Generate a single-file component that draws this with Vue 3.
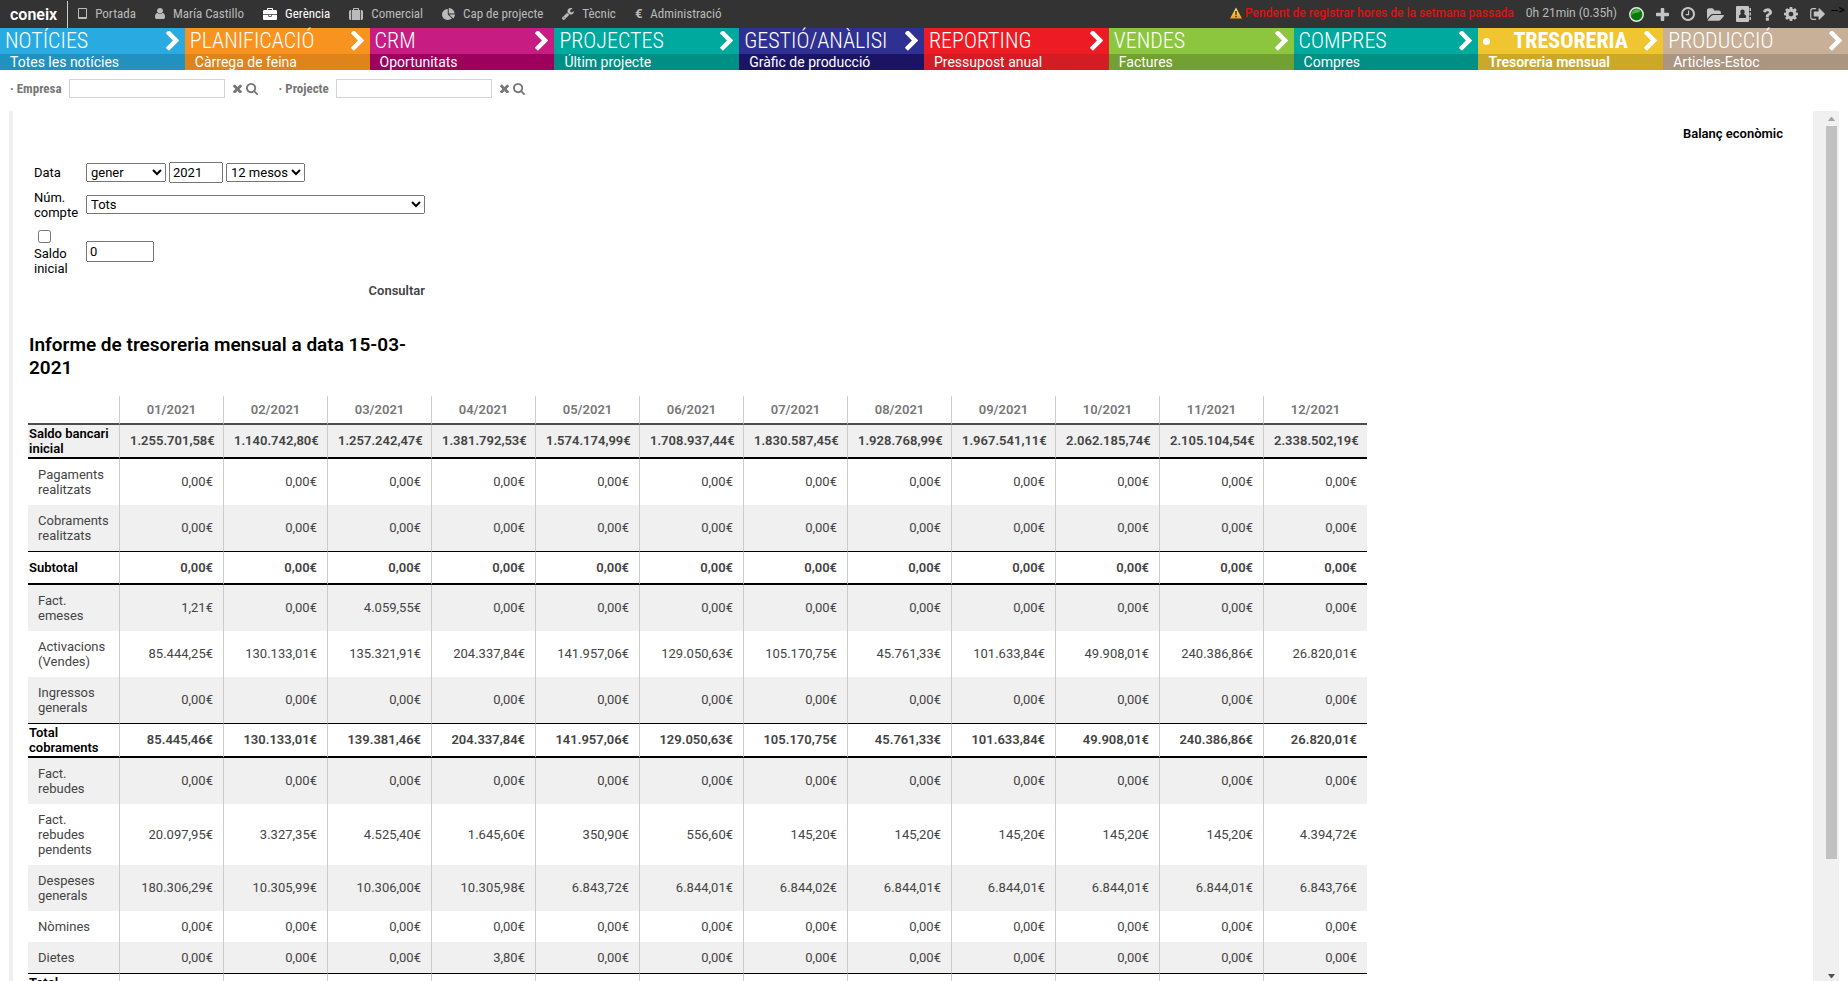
<script setup>
import { ref } from 'vue'

const icons = {
  user: ['256 128 1280 1536', 'M1536 1399q0 109-62.5 187t-150.5 78h-854q-88 0-150.5-78t-62.5-187q0-85 8.5-160.5t31.5-152 58.5-131 94-89 134.5-34.5q131 128 313 128t313-128q76 0 134.5 34.5t94 89 58.5 131 31.5 152 8.5 160.5zm-256-887q0 159-112.5 271.5t-271.5 112.5-271.5-112.5-112.5-271.5 112.5-271.5 271.5-112.5 271.5 112.5 112.5 271.5z'],
  tablet: ['0 0 9 11', 'M1 0h7q1 0 1 1v9q0 1-1 1h-7q-1 0-1-1v-9q0-1 1-1zM1 1v8h7v-8z'],
  briefcase: ['0 0 1792 1536', 'M640 256h512v-128h-512v128zm1152 640v480q0 66-47 113t-113 47h-1472q-66 0-113-47t-47-113v-480h672v160q0 26 19 45t45 19h320q26 0 45-19t19-45v-160h672zm-768 0v128h-256v-128h256zm768-480v384h-1792v-384q0-66 47-113t113-47h352v-160q0-40 28-68t68-28h576q40 0 68 28t28 68v160h352q66 0 113 47t47 113z'],
  suitcase: ['0 0 1792 1536', 'M640 256h512v-128h-512v128zm-352 0v1280h-64q-92 0-158-66t-66-158v-832q0-92 66-158t158-66h64zm1120 0v1280h-1024v-1280h128v-160q0-40 28-68t68-28h576q40 0 68 28t28 68v160h128zm384 224v832q0 92-66 158t-158 66h-64v-1280h64q92 0 158 66t66 158z'],
  pie: ['0 0 1728 1664', 'M768 890l546 546q-106 108-247.5 168t-298.5 60q-209 0-385.5-103t-279.5-279.5-103-385.5 103-385.5 279.5-279.5 385.5-103v762zm187 6h773q0 157-60 298.5t-168 247.5zm709-128h-768v-768q209 0 385.5 103t279.5 279.5 103 385.5z'],
  wrench: ['85 128 1641 1643', 'M448 1472q0-26-19-45t-45-19-45 19-19 45 19 45 45 19 45-19 19-45zm644-420l-682 682q-37 37-90 37-52 0-91-37l-106-108q-38-36-38-90 0-53 38-91l681-681q39 98 114.5 173.5t173.5 114.5zm634-435q0 39-23 106-47 134-164.5 217.5t-258.5 83.5q-185 0-316.5-131.5t-131.5-316.5 131.5-316.5 316.5-131.5q58 0 121.5 16.5t107.5 46.5q16 11 16 28t-16 28l-293 169v224l193 107q5-3 79-48.5t135.5-81 70.5-35.5q15 0 23.5 10t8.5 25z'],
  plus: ['192 128 1408 1408', 'M1600 736v192q0 40-28 68t-68 28h-416v416q0 40-28 68t-68 28h-192q-40 0-68-28t-28-68v-416h-416q-40 0-68-28t-28-68v-192q0-40 28-68t68-28h416v-416q0-40 28-68t68-28h192q40 0 68 28t28 68v416h416q40 0 68 28t28 68z'],
  clock: ['128 128 1536 1536', 'M1024 544v448q0 14-9 23t-23 9h-320q-14 0-23-9t-9-23v-64q0-14 9-23t23-9h224v-352q0-14 9-23t23-9h64q14 0 23 9t9 23zm416 352q0-148-73-273t-198-198-273-73-273 73-198 198-73 273 73 273 198 198 273 73 273-73 198-198 73-273zm224 0q0 209-103 385.5t-279.5 279.5-385.5 103-385.5-103-279.5-279.5-103-385.5 103-385.5 279.5-279.5 385.5-103 385.5 103 279.5 279.5 103 385.5z'],
  folder: ['0 128 1879 1408', 'M1879 952q0 31-31 66l-336 396q-43 51-120.5 86.5t-143.5 35.5h-1088q-34 0-60.5-13t-26.5-43q0-31 31-66l336-396q43-51 120.5-86.5t143.5-35.5h1088q34 0 60.5 13t26.5 43zm-343-344v160h-832q-94 0-197 47.5t-164 119.5l-337 396-5 6q0-4-.5-12.5t-.5-12.5v-960q0-92 66-158t158-66h320q92 0 158 66t66 158v32h544q92 0 158 66t66 158z'],
  book: ['0 0 15 16', 'M1 0h11q1 0 1 1v14q0 1-1 1h-11q-1 0-1-1v-14q0-1 1-1zM6.5 3.5a2.3 2.3 0 0 0-2.2 2.3q0 1.2 .7 2.1q-2.2 .3-2.2 3.1q0 1 1 1h5.4q1 0 1-1q0-2.8-2.2-3.1q.7-.9 .7-2.1a2.3 2.3 0 0 0-2.2-2.3zM13.5 2h1q.5 0 .5 .5v2q0 .5-.5 .5h-1zM13.5 6.5h1q.5 0 .5 .5v2q0 .5-.5 .5h-1zM13.5 11h1q.5 0 .5 .5v2q0 .5-.5 .5h-1z'],
  question: ['476 256 928 1280', 'M1088 1256v240q0 16-12 28t-28 12h-240q-16 0-28-12t-12-28v-240q0-16 12-28t28-12h240q16 0 28 12t12 28zm316-600q0 54-15.5 101t-35 76.5-55 59.5-57.5 43.5-61 35.5q-41 23-68.5 65t-27.5 67q0 17-12 32.5t-28 15.5h-240q-15 0-25.5-18.5t-10.5-37.5v-45q0-83 65-156.5t143-108.5q59-27 84-56t25-76q0-42-46.5-74t-107.5-32q-65 0-108 29-35 25-107 115-13 16-31 16-12 0-25-8l-164-125q-13-10-15.5-25t5.5-28q160-266 464-266 80 0 161 31t146 83 106 127.5 41 158.5z'],
  cog: ['128 128 1536 1536', 'M1152 896q0-106-75-181t-181-75-181 75-75 181 75 181 181 75 181-75 75-181zm512-109v222q0 12-8 23t-20 13l-185 28q-19 54-39 91 35 50 107 138 10 12 10 25t-9 23q-27 37-99 108t-94 71q-12 0-26-9l-138-108q-44 23-91 38-16 136-29 186-7 28-36 28h-222q-14 0-24.5-8.5t-11.5-21.5l-28-184q-49-16-90-37l-141 107q-10 9-25 9-14 0-25-11-126-114-165-168-7-10-7-23 0-12 8-23 15-21 51-66.5t54-70.5q-27-50-41-99l-183-27q-13-2-21-12.5t-8-23.5v-222q0-12 8-23t19-13l186-28q14-46 39-92-40-57-107-138-10-12-10-24 0-10 9-23 26-36 98.5-107.5t94.5-71.5q13 0 26 10l138 107q44-23 91-38 16-136 29-186 7-28 36-28h222q14 0 24.5 8.5t11.5 21.5l28 184q49 16 90 37l142-107q9-9 24-9 13 0 25 10 129 119 165 170 7 8 7 22 0 12-8 23-15 21-51 66.5t-54 70.5q26 50 41 98l183 28q13 2 21 12.5t8 23.5z'],
  exit: ['64 256 1568 1280', 'M704 1440q0 4 1 20t.5 26.5-3 23.5-10 19.5-20.5 6.5h-320q-119 0-203.5-84.5t-84.5-203.5v-704q0-119 84.5-203.5t203.5-84.5h320q13 0 22.5 9.5t9.5 22.5q0 4 1 20t.5 26.5-3 23.5-10 19.5-20.5 6.5h-320q-66 0-113 47t-47 113v704q0 66 47 113t113 47h312l11.5 1 11.5 3 8 5.5 7 9 2 13.5zm928-544q0 26-19 45l-544 544q-19 19-45 19t-45-19-19-45v-288h-448q-26 0-45-19t-19-45v-384q0-26 19-45t45-19h448v-288q0-26 19-45t45-19 45 19l544 544q19 19 19 45z'],
}

const nav = [
  { label: 'Portada', icon: 'tablet', w: 9, h: 11 },
  { label: 'María Castillo', icon: 'user', w: 10, h: 11 },
  { label: 'Gerència', icon: 'briefcase', w: 14, h: 12, active: true },
  { label: 'Comercial', icon: 'suitcase', w: 14, h: 12 },
  { label: 'Cap de projecte', icon: 'pie', w: 13, h: 12 },
  { label: 'Tècnic', icon: 'wrench', w: 12, h: 12 },
  { label: 'Administració', glyph: '€' },
]

const tools = [
  { name: 'Afegir', icon: 'plus', w: 13, h: 13 },
  { name: 'Hores', icon: 'clock', w: 14, h: 14 },
  { name: 'Carpetes', icon: 'folder', w: 17, h: 13 },
  { name: 'Contactes', icon: 'book', w: 15, h: 16 },
  { name: 'Ajuda', icon: 'question', w: 9, h: 13 },
  { name: 'Configuració', icon: 'cog', w: 14, h: 14 },
  { name: 'Sortir', icon: 'exit', w: 15, h: 12 },
]

const tiles = [
  { title: 'NOTÍCIES', sub: 'Totes les notícies', tone: 'sky' },
  { title: 'PLANIFICACIÓ', sub: 'Càrrega de feina', tone: 'orange' },
  { title: 'CRM', sub: 'Oportunitats', tone: 'magenta' },
  { title: 'PROJECTES', sub: 'Últim projecte', tone: 'teal' },
  { title: 'GESTIÓ/ANÀLISI', sub: 'Gràfic de producció', tone: 'indigo' },
  { title: 'REPORTING', sub: 'Pressupost anual', tone: 'red' },
  { title: 'VENDES', sub: 'Factures', tone: 'green' },
  { title: 'COMPRES', sub: 'Compres', tone: 'teal' },
  { title: 'TRESORERIA', sub: 'Tresoreria mensual', tone: 'yellow', active: true },
  { title: 'PRODUCCIÓ', sub: 'Articles-Estoc', tone: 'sand' },
]

const filters = [
  { id: 'empresa', label: 'Empresa' },
  { id: 'projecte', label: 'Projecte' },
]

const months = Array.from({ length: 12 }, (_, i) => `${String(i + 1).padStart(2, '0')}/2021`)
const zeros = Array(12).fill('0,00€')
const euros = (list) => list.map((v) => `${v}€`)
const rows = [
  { label: 'Saldo bancari inicial', kind: 'opening', values: euros(['1.255.701,58', '1.140.742,80', '1.257.242,47', '1.381.792,53', '1.574.174,99', '1.708.937,44', '1.830.587,45', '1.928.768,99', '1.967.541,11', '2.062.185,74', '2.105.104,54', '2.338.502,19']) },
  { label: 'Pagaments realitzats', values: zeros },
  { label: 'Cobraments realitzats', values: zeros },
  { label: 'Subtotal', kind: 'total', values: zeros },
  { label: 'Fact. emeses', values: ['1,21€', '0,00€', '4.059,55€', ...zeros.slice(3)] },
  { label: 'Activacions (Vendes)', values: euros(['85.444,25', '130.133,01', '135.321,91', '204.337,84', '141.957,06', '129.050,63', '105.170,75', '45.761,33', '101.633,84', '49.908,01', '240.386,86', '26.820,01']) },
  { label: 'Ingressos generals', values: zeros },
  { label: 'Total cobraments', kind: 'total', values: euros(['85.445,46', '130.133,01', '139.381,46', '204.337,84', '141.957,06', '129.050,63', '105.170,75', '45.761,33', '101.633,84', '49.908,01', '240.386,86', '26.820,01']) },
  { label: 'Fact. rebudes', values: zeros },
  { label: 'Fact. rebudes pendents', values: euros(['20.097,95', '3.327,35', '4.525,40', '1.645,60', '350,90', '556,60', '145,20', '145,20', '145,20', '145,20', '145,20', '4.394,72']) },
  { label: 'Despeses generals', values: euros(['180.306,29', '10.305,99', '10.306,00', '10.305,98', '6.843,72', '6.844,01', '6.844,02', '6.844,01', '6.844,01', '6.844,01', '6.844,01', '6.843,76']) },
  { label: 'Nòmines', values: zeros },
  { label: 'Dietes', values: ['0,00€', '0,00€', '0,00€', '3,80€', ...zeros.slice(4)] },
  { label: 'Total pagaments', kind: 'total', values: Array(12).fill('') },
]

const search = ref({ empresa: '', projecte: '' })
const month = ref('gener')
const year = ref('2021')
const span = ref('12 mesos')
const account = ref('Tots')
const useBalance = ref(false)
const balance = ref('0')
</script>

<template>
  <div class="app">
    <header class="topbar">
      <a class="brand" href="#">coneix</a>
      <nav class="nav">
        <a v-for="n in nav" :key="n.label" href="#" :class="{ active: n.active }">
          <svg v-if="n.icon" :width="n.w" :height="n.h" :viewBox="icons[n.icon][0]" preserveAspectRatio="none"><path :d="icons[n.icon][1]" fill="currentColor" fill-rule="evenodd" /></svg>
          <span v-else class="euro">{{ n.glyph }}</span>
          <span>{{ n.label }}</span>
        </a>
      </nav>
      <div class="status">
        <a class="alert" href="#">
          <svg width="12" height="12" viewBox="0 0 12 12">
            <defs><linearGradient id="warn" x1="0" y1="0" x2="0" y2="1"><stop offset="0" stop-color="#ffe680" /><stop offset="1" stop-color="#f0a010" /></linearGradient></defs>
            <path d="M6 0.5L12 11.5H0z" fill="url(#warn)" />
            <path d="M5.2 4h1.6l-.3 4h-1zM5.3 8.8h1.4v1.4h-1.4z" fill="#222" />
          </svg>
          <span>Pendent de registrar hores de la setmana passada</span>
        </a>
        <span class="time">0h 21min (0.35h)</span>
        <div class="tools">
          <button type="button" aria-label="Estat">
            <svg width="15" height="15" viewBox="0 0 15 15">
              <circle cx="7.5" cy="7.5" r="6.7" fill="#087a08" stroke="#e8e8e8" stroke-width="1.5" />
              <path d="M2.5 9C3.5 5.5 7 6.5 9 5.5C11 4.5 11.5 4 11 3.2A5.5 5.5 0 0 0 2.5 9z" fill="#4fae4a" />
            </svg>
          </button>
          <button v-for="t in tools" :key="t.name" type="button" :aria-label="t.name">
            <svg :width="t.w" :height="t.h" :viewBox="icons[t.icon][0]"><path :d="icons[t.icon][1]" fill="currentColor" fill-rule="evenodd" /></svg>
          </button>
        </div>
        <span class="stray">--&gt;</span>
      </div>
    </header>

    <nav class="tiles">
      <div v-for="t in tiles" :key="t.title" class="tile" :class="[t.tone, { active: t.active }]">
        <a class="title" href="#">
          <span v-if="t.active" class="dot"></span>
          <span>{{ t.title }}</span>
          <svg width="13" height="20" viewBox="346 100 1036 1546"><path fill="#fff" d="M1363 877l-742 742q-19 19-45 19t-45-19l-166-166q-19-19-19-45t19-45l531-531-531-531q-19-19-19-45t19-45l166-166q19-19 45-19t45 19l742 742q19 19 19 45t-19 45z" /></svg>
        </a>
        <a class="sub" href="#">{{ t.sub }}</a>
      </div>
    </nav>

    <form class="filters" @submit.prevent>
      <div v-for="f in filters" :key="f.id" class="filter">
        <label :for="f.id">· {{ f.label }}</label>
        <input :id="f.id" v-model="search[f.id]" type="text" />
        <button type="button" aria-label="Esborrar" @click="search[f.id] = ''">
          <svg width="9" height="9" viewBox="302 302 1188 1188"><path fill="currentColor" d="M1490 1322q0 40-28 68l-136 136q-28 28-68 28t-68-28l-294-294-294 294q-28 28-68 28t-68-28l-136-136q-28-28-28-68t28-68l294-294-294-294q-28-28-28-68t28-68l136-136q28-28 68-28t68 28l294 294 294-294q28-28 68-28t68 28l136 136q28 28 28 68t-28 68l-294 294 294 294q28 28 28 68z" /></svg>
        </button>
        <button type="button" aria-label="Cercar">
          <svg width="12" height="12" viewBox="64 128 1664 1664"><path fill="currentColor" d="M1216 832q0-185-131.5-316.5t-316.5-131.5-316.5 131.5-131.5 316.5 131.5 316.5 316.5 131.5 316.5-131.5 131.5-316.5zm512 832q0 52-38 90t-90 38q-54 0-90-38l-343-342q-179 124-399 124-143 0-273.5-55.5t-225-150-150-225-55.5-273.5 55.5-273.5 150-225 225-150 273.5-55.5 273.5 55.5 225 150 150 225 55.5 273.5q0 220-124 399l343 343q37 37 37 90z" /></svg>
        </button>
      </div>
    </form>

    <main class="panel">
      <div class="content">
        <a class="link" href="#">Balanç econòmic</a>
        <form class="query" @submit.prevent>
          <label for="month">Data</label>
          <div class="controls">
            <select id="month" v-model="month" class="month"><option>gener</option></select>
            <input v-model="year" class="year" type="text" aria-label="Any" />
            <select v-model="span" class="span" aria-label="Període"><option>12 mesos</option></select>
          </div>
          <label for="account">Núm. compte</label>
          <select id="account" v-model="account"><option>Tots</option></select>
          <label for="use"><input id="use" v-model="useBalance" type="checkbox" />Saldo inicial</label>
          <input v-model="balance" class="balance" type="text" aria-label="Import del saldo inicial" />
          <button class="submit" type="submit">Consultar</button>
        </form>
        <h1>Informe de tresoreria mensual a data 15-03-2021</h1>
        <table>
          <thead>
            <tr>
              <th class="corner"></th>
              <th v-for="m in months" :key="m" scope="col">{{ m }}</th>
            </tr>
          </thead>
          <tbody>
            <tr v-for="r in rows" :key="r.label" :class="r.kind">
              <th scope="row">{{ r.label }}</th>
              <td v-for="(v, i) in r.values" :key="i">{{ v }}</td>
            </tr>
          </tbody>
        </table>
      </div>
      <div class="rail" aria-hidden="true">
        <div class="bar">
          <svg width="7" height="4" viewBox="0 0 7 4"><path d="M3 0h1l3 4H0z" fill="#a3a3a3" /></svg>
          <div class="track"><div class="thumb"></div></div>
          <svg width="7" height="4" viewBox="0 0 7 4"><path d="M0 0h7l-3 4h-1z" fill="#505050" /></svg>
        </div>
      </div>
    </main>
  </div>
</template>

<style>
body {
  margin: 0;
  overflow: hidden;
}
</style>

<style scoped>
.app {
  display: flex;
  flex-direction: column;
  height: 100vh;
  background: #fff;
  color: #000;
  font-family: Roboto, sans-serif;
  font-size: 13px;
  line-height: 15px;
}
.app * {
  box-sizing: border-box;
}
a {
  color: inherit;
  text-decoration: none;
}
svg {
  display: block;
  flex: none;
}
button {
  margin: 0;
  padding: 0;
  border: 0;
  background: none;
  color: inherit;
  font: inherit;
  cursor: pointer;
}

.topbar {
  display: flex;
  flex: none;
  align-items: center;
  height: 28px;
  overflow: hidden;
  background: #333;
  color: #bbb;
  white-space: nowrap;
}
.brand {
  height: 27px;
  padding: 0 10px;
  border-right: 1px solid #ccc;
  color: #fff;
  font-size: 16px;
  font-weight: 600;
  line-height: 27px;
}
.nav {
  display: flex;
  gap: 19px;
  margin-left: 10px;
  padding-bottom: 1px;
  font-family: "Roboto Condensed", Roboto, sans-serif;
}
.nav a {
  display: flex;
  align-items: center;
  gap: 8px;
}
.nav .active {
  color: #fff;
}
.euro {
  font-family: Roboto, sans-serif;
  font-weight: 700;
}
.status {
  display: flex;
  align-items: center;
  margin-left: auto;
  font-size: 12px;
}
.alert {
  display: flex;
  align-items: center;
  gap: 3px;
  padding-bottom: 2px;
  color: #e01010;
  font-weight: 500;
}
.time {
  margin-left: 12px;
  padding-bottom: 2px;
}
.tools {
  display: flex;
  align-items: center;
  gap: 12px;
  margin-left: 12px;
  color: #c4c4c4;
}
.stray {
  width: 17px;
  margin-left: 6px;
  padding-bottom: 10px;
  color: #000;
  font-size: 13px;
}

.tiles {
  display: grid;
  flex: none;
  grid-template-columns: repeat(10, 1fr);
  color: #fff;
  white-space: nowrap;
}
.title {
  display: flex;
  align-items: center;
  height: 26px;
  padding: 0 6px 0 5px;
  font-family: "Roboto Condensed", Roboto, sans-serif;
  font-size: 22px;
  font-weight: 300;
  line-height: 26px;
}
.title svg {
  margin-left: auto;
}
.sub {
  display: block;
  height: 16px;
  padding-left: 10px;
  overflow: hidden;
  background: rgba(0, 0, 0, 0.15);
  font-size: 14px;
  line-height: 16px;
}
.active .title {
  font-weight: 700;
}
.active .sub {
  font-weight: 600;
}
.dot {
  width: 7px;
  height: 7px;
  margin-right: 23px;
  border-radius: 50%;
  background: #fff;
}
.sky { background: #29abe2; }
.orange { background: #f7931e; }
.orange .sub { background: #de841b; }
.magenta { background: #c71c81; }
.magenta .sub { background: #9e005d; }
.teal { background: #00a99d; }
.indigo { background: #2e3192; }
.indigo .sub { background: #1b1464; }
.red { background: #ed1c24; }
.red .sub { background: #d41c24; }
.green { background: #8cc63f; }
.green .sub { background: #72a033; }
.yellow { background: #efc62f; }
.sand { background: #c7b097; }

.filters {
  display: flex;
  flex: none;
  gap: 21px;
  height: 41px;
  padding: 9px 10px 0;
  color: #777;
}
.filter {
  display: flex;
  align-items: center;
  gap: 4px;
  height: 19px;
}
.filter label {
  margin-right: 3px;
  font-family: "Roboto Condensed", Roboto, sans-serif;
  font-weight: 700;
}
.filter input {
  width: 156px;
  height: 19px;
  margin-right: 4px;
  border: 1px solid #d4d4d4;
}

.panel {
  display: flex;
  flex: 1;
  min-height: 0;
  margin: 0 9px;
  border-left: 4px solid #f0f0f0;
}
.content {
  display: flex;
  flex: 1;
  flex-direction: column;
  align-items: flex-start;
  overflow: hidden;
  padding: 15px 30px 0 15px;
}
.link {
  align-self: flex-end;
  font-weight: 600;
}
.query {
  display: grid;
  grid-template-columns: 46px 339px;
  align-items: center;
  gap: 7px 6px;
  margin: 21px 0 0 6px;
}
.query select,
.query input {
  font: inherit;
  color: #000;
}
.query select {
  height: 19px;
  margin-bottom: 1px;
}
.query input[type="text"] {
  height: 21px;
}
.controls {
  display: flex;
  align-items: center;
  gap: 3px;
}
.month { width: 80px; }
.year { width: 54px; }
.span { width: 79px; }
.balance { width: 68px; }
.query input[type="checkbox"] {
  display: block;
  width: 13px;
  height: 13px;
  margin: 3px 4px;
}
.submit {
  grid-column: 2;
  justify-self: end;
  color: #444;
  font-weight: 600;
}
h1 {
  width: 400px;
  margin: 35px 0 17px 1px;
  font-size: 19px;
  font-weight: 600;
  line-height: 23px;
}

table {
  flex: none;
  border-collapse: separate;
  border-spacing: 0;
  table-layout: fixed;
  width: 1339px;
  color: #444;
}
th,
td {
  padding: 8px 10px;
  border: 0 solid #000;
}
thead th {
  padding: 6px 0;
  border-bottom: 2px solid #4c4c4c;
  color: #777;
  font-weight: 600;
}
thead .corner {
  width: 91px;
}
tbody th {
  font-weight: 400;
  text-align: left;
}
td {
  padding-top: 7px;
  text-align: right;
}
td,
thead th + th {
  border-left: 1px solid #ccc;
}
tbody tr:nth-child(odd) {
  background: #f0f0f0;
}
.opening > *,
.total > * {
  border-bottom: 2px solid #000;
  font-weight: 600;
}
.total > * {
  height: 34px;
  border-top: 1px solid #000;
}
.opening th,
.total th {
  padding: 1px;
  color: #000;
}

.rail {
  display: flex;
  flex: none;
  justify-content: flex-end;
  width: 26px;
  background: #f0f0f0;
}
.bar {
  display: flex;
  flex-direction: column;
  align-items: center;
  width: 15px;
  padding: 6px 0 3px;
}
.track {
  flex: 1;
  width: 11px;
  margin: 5px 0;
}
.thumb {
  height: 87%;
  background: #c1c1c1;
}
</style>
